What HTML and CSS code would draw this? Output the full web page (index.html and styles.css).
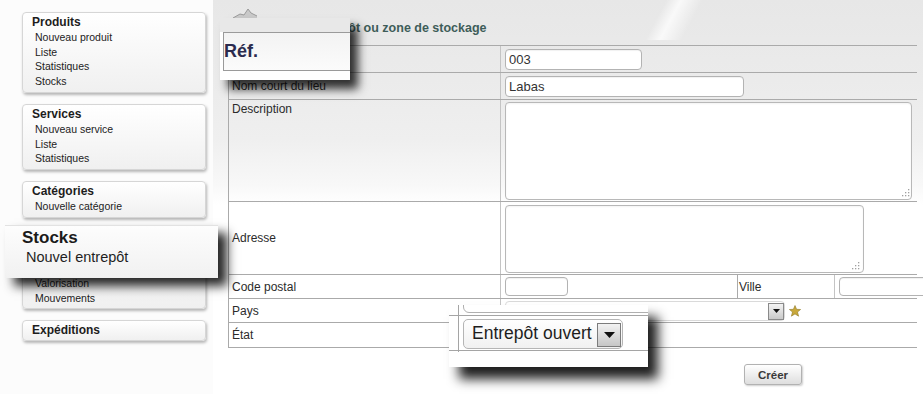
FILE: index.html
```html
<!DOCTYPE html>
<html lang="fr">
<head>
<meta charset="utf-8">
<title>Nouvel entrepôt</title>
<link rel="stylesheet" href="styles.css">
</head>
<body>
<div class="page">
  <nav class="side">
    <div class="menu">
      <div class="menu-title">Produits</div>
      <ul class="menu-items"><li>Nouveau produit</li><li>Liste</li><li>Statistiques</li><li>Stocks</li></ul>
    </div>
    <div class="menu">
      <div class="menu-title">Services</div>
      <ul class="menu-items"><li>Nouveau service</li><li>Liste</li><li>Statistiques</li></ul>
    </div>
    <div class="menu">
      <div class="menu-title">Catégories</div>
      <ul class="menu-items"><li>Nouvelle catégorie</li></ul>
    </div>
    <div class="menu">
      <div class="menu-title">Stocks</div>
      <ul class="menu-items"><li>Nouvel entrepôt</li><li>Liste</li><li>Valorisation</li><li>Mouvements</li></ul>
    </div>
    <div class="menu menu-single">
      <div class="menu-title">Expéditions</div>
    </div>
  </nav>

  <main class="main">
    <div class="content">
      <div class="titlebar">
        <svg class="title-icon" width="24" height="12" viewBox="0 0 24 12"><path d="M0 11 L7 7 L11 8 L15 2 L18 6 L24 9 L24 12 L0 12 Z" fill="#c9c9c9"/><path d="M0 11 L7 7 L11 8 L15 2 L18 6 L24 9" fill="none" stroke="#9a9a9a" stroke-width="1"/></svg>
        <h1 class="title">Nouvel entrepôt ou zone de stockage</h1>
      </div>
      <table class="form">
        <colgroup><col class="c1"><col class="c2"><col class="c3"><col class="c4"></colgroup>
        <tr class="r1">
          <td class="lbl">Réf.</td>
          <td colspan="3" class="val"><input class="in in-ref" value="003"></td>
        </tr>
        <tr class="r2">
          <td class="lbl">Nom court du lieu</td>
          <td colspan="3" class="val"><input class="in in-name" value="Labas"></td>
        </tr>
        <tr class="r3">
          <td class="lbl lbl-top">Description</td>
          <td colspan="3" class="val val-top"><span class="ta"><textarea class="area area-desc"></textarea><svg class="grip" width="8" height="8" viewBox="0 0 8 8"><g fill="#a0a0a0"><rect x="6" y="0" width="1.3" height="1.3"/><rect x="3" y="3" width="1.3" height="1.3"/><rect x="6" y="3" width="1.3" height="1.3"/><rect x="0" y="6" width="1.3" height="1.3"/><rect x="3" y="6" width="1.3" height="1.3"/><rect x="6" y="6" width="1.3" height="1.3"/></g></svg></span></td>
        </tr>
        <tr class="r4">
          <td class="lbl">Adresse</td>
          <td colspan="3" class="val"><span class="ta ta-addr"><textarea class="area area-addr"></textarea><svg class="grip" width="8" height="8" viewBox="0 0 8 8"><g fill="#a0a0a0"><rect x="6" y="0" width="1.3" height="1.3"/><rect x="3" y="3" width="1.3" height="1.3"/><rect x="6" y="3" width="1.3" height="1.3"/><rect x="0" y="6" width="1.3" height="1.3"/><rect x="3" y="6" width="1.3" height="1.3"/><rect x="6" y="6" width="1.3" height="1.3"/></g></svg></span></td>
        </tr>
        <tr class="r5">
          <td class="lbl">Code postal</td>
          <td class="val"><input class="in in-zip"></td>
          <td class="lbl lbl-town">Ville</td>
          <td class="val"><input class="in in-town"></td>
        </tr>
        <tr class="r6">
          <td class="lbl">Pays</td>
          <td colspan="3" class="val"><span class="sel"><span class="sel-btn"><svg width="7" height="4" viewBox="0 0 7 4"><path d="M0 0 H7 L3.5 4 Z" fill="#111"/></svg></span></span><svg class="star" width="12" height="12" viewBox="0 0 12 12"><path d="M6 0.5 L7.6 4.3 L11.6 4.5 L8.5 7 L9.6 11.2 L6 8.9 L2.4 11.2 L3.5 7 L0.4 4.5 L4.4 4.3 Z" fill="#c9a83a" stroke="#8f7a2a" stroke-width="0.6"/></svg></td>
        </tr>
        <tr class="r7">
          <td class="lbl">État</td>
          <td colspan="3" class="val"></td>
        </tr>
      </table>
      <div class="actions"><button class="btn">Créer</button></div>
    </div>
  </main>
</div>

<div class="zoom zoom-ref">
  <div class="zr-cell">Réf.</div>
</div>

<div class="zoom zoom-stocks">
  <div class="zs-title">Stocks</div>
  <div class="zs-item">Nouvel entrepôt</div>
</div>

<div class="zoom zoom-etat">
  <div class="ze-prev"></div>
  <div class="ze-line ze-line-top"></div>
  <div class="ze-vline"></div>
  <div class="ze-row">
    <div class="ze-select">
      <span class="ze-text">Entrepôt ouvert</span>
      <span class="ze-btn"><svg width="11" height="6" viewBox="0 0 11 6"><path d="M0 0 H11 L5.5 6 Z" fill="#111"/></svg></span>
    </div>
  </div>
  <div class="ze-line ze-line-bottom"></div>
</div>
</body>
</html>
```

FILE: styles.css
```css
* { box-sizing: border-box; }
html, body { margin: 0; padding: 0; }
body {
  width: 923px;
  height: 394px;
  overflow: hidden;
  position: relative;
  font-family: "Liberation Sans", Arial, sans-serif;
  color: #333;
  background: #fff;
}

.page { display: flex; height: 394px; }

/* ---------- sidebar ---------- */
.side {
  width: 213px;
  flex: none;
  padding: 12px 0 0 22px;
  display: flex;
  flex-direction: column;
  align-items: flex-start;
  gap: 11px;
  background: #fcfcfc;
}
.menu {
  width: 184px;
  border: 1px solid #d6d6d6;
  border-radius: 4px;
  background: linear-gradient(#ffffff, #f0f0f0);
  box-shadow: 1px 2px 3px rgba(0, 0, 0, 0.28);
  padding: 2px 0 2px 9px;
}
.menu-title {
  font-size: 12px;
  line-height: 15px;
  font-weight: bold;
  color: #1d1d1d;
}
.menu-items {
  list-style: none;
  margin: 0 0 0 3px;
  padding: 0 0 1px;
}
.menu-items li {
  font-size: 10.5px;
  line-height: 14.7px;
  color: #222;
}

/* ---------- main ---------- */
.main {
  flex: 1;
  background:
    linear-gradient(118deg, transparent 0 62%, rgba(255,255,255,0.75) 64%, transparent 67%, transparent 100%) 0 0 / 100% 40px no-repeat,
    linear-gradient(180deg, #e7e7e7 0, #ebebeb 80px, #efefef 140px, #f8f8f8 185px, #ffffff 205px);
}
.content {
  margin-left: 15px;
  width: 688px;
}
.titlebar {
  height: 45px;
  display: flex;
  align-items: flex-start;
  gap: 8px;
  padding-left: 5px;
}
.title-icon { margin-top: 7px; }
.title {
  margin: 21px 0 0;
  font-size: 12.5px;
  line-height: 14px;
  font-weight: bold;
  color: #3e5d59;
}

.form {
  width: 688px;
  table-layout: fixed;
  border-collapse: collapse;
  border-top: 1px solid #8d9f99;
}
.c1 { width: 272px; }
.c2 { width: 237px; }
.c3 { width: 97px; }
.c4 { width: 82px; }
.form td {
  border: 1px solid #aaaaaa;
  border-right: none;
  padding: 0 3px;
  font-size: 12px;
  color: #2b2b2b;
  vertical-align: middle;
}
.form td.lbl { padding-left: 3px; }
.form td.lbl-town { padding-left: 1px; }
.form td.val { padding-left: 4px; border-left: 1px solid #c4c4c4; }
.form td.lbl-top, .form td.val-top { vertical-align: top; padding-top: 2px; }
.r1 td { height: 27px; }
.r2 td { height: 27px; }
.r3 td { height: 102px; }
.r4 td { height: 73px; }
.r5 td { height: 24px; }
.r6 td { height: 24px; }
.r7 td { height: 25px; }

.in {
  display: block;
  height: 21px;
  border: 1px solid #b3b3b3;
  border-radius: 4px;
  background: #fff;
  box-shadow: inset 0 1px 1px rgba(0, 0, 0, 0.06);
  padding: 0 3px;
  font-family: "Liberation Sans", Arial, sans-serif;
  font-size: 13px;
  color: #333;
}
.in-ref { width: 137px; }
.in-name { width: 239px; }
.in-zip { width: 63px; height: 19px; }
.in-town { width: 90px; height: 19px; }

.ta { position: relative; display: block; }
.area {
  display: block;
  resize: none;
  border: 1px solid #b8b8b8;
  border-radius: 4px;
  background: #fff;
  box-shadow: inset 0 1px 2px rgba(0, 0, 0, 0.05);
  font-family: "Liberation Sans", Arial, sans-serif;
  font-size: 13px;
}
.area-desc { width: 407px; height: 98px; }
.area-addr { width: 359px; height: 68px; margin-top: 1px; }
.grip { position: absolute; right: 4px; bottom: 3px; }
.ta-addr .grip { right: auto; left: 347px; }

.sel {
  position: relative;
  display: inline-block;
  vertical-align: middle;
  width: 280px;
  height: 20px;
  border: 1px solid #dadada;
  border-radius: 4px;
  background: #fff;
}
.sel-btn {
  position: absolute;
  right: 0;
  top: 1px;
  width: 16px;
  height: 17px;
  border: 1px solid #8a8a8a;
  background: linear-gradient(#f3f3f3, #c9c9c9);
  display: flex;
  align-items: center;
  justify-content: center;
}
.star { vertical-align: middle; margin-left: 4px; }

.actions { padding: 16px 0 0 516px; }
.btn {
  width: 58px;
  height: 21px;
  border: 1px solid #b2b2b2;
  border-radius: 3px;
  background: linear-gradient(#ffffff, #dedede);
  box-shadow: 1px 1px 2px rgba(0, 0, 0, 0.2);
  font-family: "Liberation Sans", Arial, sans-serif;
  font-size: 11.5px;
  font-weight: bold;
  color: #3a3a3a;
  padding: 0;
}

/* ---------- magnified overlays ---------- */
.zoom { position: absolute; overflow: hidden; }

.zoom-ref {
  left: 220px;
  top: 18px;
  width: 130px;
  height: 62px;
  background: linear-gradient(#e8e8e8 0, #e8e8e8 14px, #ffffff 14px);
  box-shadow: 8px 9px 9px rgba(0, 0, 0, 0.8);
  padding: 14px 0 0 3px;
}
.zr-cell {
  height: 39px;
  border-top: 1px solid #9a9a9a;
  border-left: 1px solid #9a9a9a;
  border-bottom: 1px solid #9a9a9a;
  background: linear-gradient(#f3f3f3, #fbfbfb);
  display: flex;
  align-items: center;
  padding: 0 0 1px 0;
  font-size: 18px;
  font-weight: bold;
  color: #2b2b4e;
}

.zoom-stocks {
  left: 5px;
  top: 225px;
  width: 213px;
  height: 53px;
  background: linear-gradient(#fdfdfd, #f1f1f1);
  border-top: 1px solid #e2e2e2;
  box-shadow: 9px 8px 10px rgba(0, 0, 0, 0.85);
  padding: 2px 0 0 17px;
}
.zs-title {
  font-size: 17px;
  line-height: 20px;
  font-weight: bold;
  color: #1b1b1b;
}
.zs-item {
  margin-left: 4px;
  font-size: 14.5px;
  line-height: 19px;
  color: #1f1f1f;
}

.zoom-etat {
  left: 449px;
  top: 305px;
  width: 199px;
  height: 62px;
  background: #fff;
  box-shadow: 10px 12px 11px rgba(0, 0, 0, 0.88);
}
.ze-prev {
  position: absolute;
  left: 14px;
  top: -12px;
  width: 200px;
  height: 20px;
  border: 1px solid #b0b0b0;
  border-radius: 6px;
}
.ze-line { position: absolute; left: 0; right: 0; height: 1px; background: #a5a5a5; }
.ze-line-top { top: 10px; }
.ze-line-bottom { top: 45px; }
.ze-vline { position: absolute; left: 9px; top: 0; width: 1px; height: 47px; background: #a5a5a5; }
.ze-row { padding: 14px 0 0 14px; }
.ze-select {
  position: relative;
  width: 160px;
  height: 30px;
  border: 1px solid #b5b5b5;
  border-radius: 5px;
  background: linear-gradient(#ffffff, #f1f1f1);
  display: flex;
  align-items: center;
  padding: 0 0 1px 8px;
}
.ze-text {
  font-size: 17.5px;
  color: #1e1e1e;
}
.ze-btn {
  position: absolute;
  right: 1px;
  top: 3px;
  width: 24px;
  height: 24px;
  border: 1px solid #7c7c7c;
  background: linear-gradient(#f2f2f2, #c6c6c6);
  display: flex;
  align-items: center;
  justify-content: center;
}
```
